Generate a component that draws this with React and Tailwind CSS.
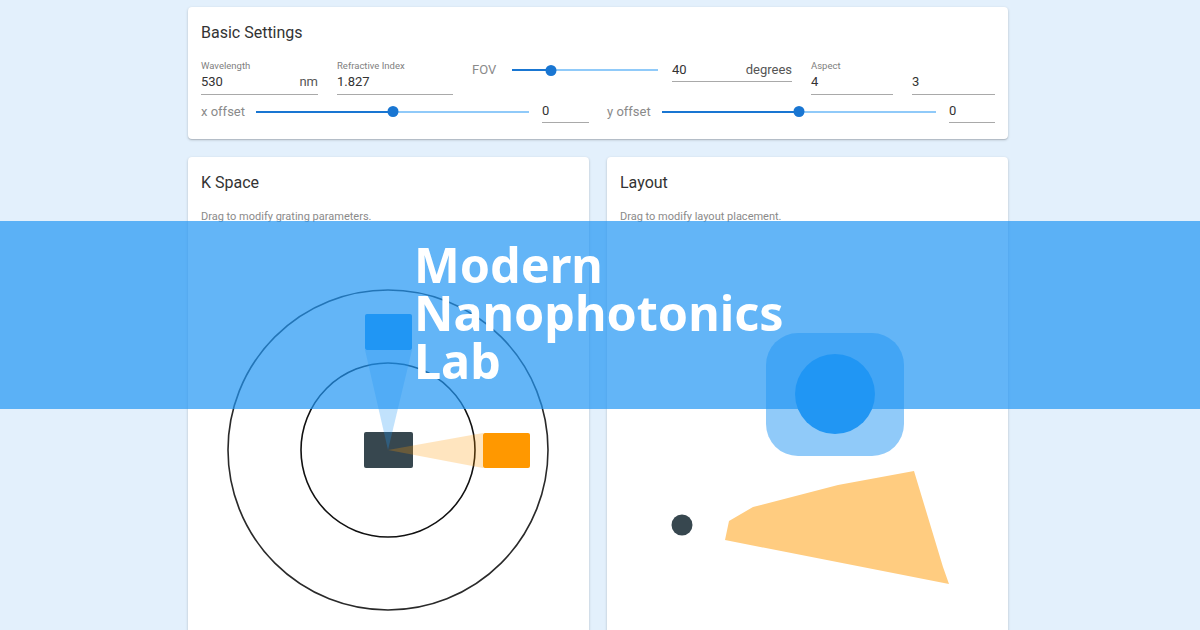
import React from "react";

function Field({ label, value, unit, className = "" }) {
  return (
    <div className={`flex flex-col border-b border-[#a9a9a9] ${className}`}>
      <span className="text-[9.5px] leading-[12px] text-[#808080]">{label || "\u00a0"}</span>
      <div className="flex justify-between pb-[3px] pt-[1px] text-[13px] leading-[18px] text-[#333]">
        <span>{value}</span>
        {unit && <span className="text-[#555]">{unit}</span>}
      </div>
    </div>
  );
}

function PlainInput({ value, unit, className = "" }) {
  return (
    <div className={`flex justify-between border-b border-[#a9a9a9] pb-[2px] text-[13px] leading-[18px] text-[#333] ${className}`}>
      <span>{value}</span>
      {unit && <span className="text-[#555]">{unit}</span>}
    </div>
  );
}

function Slider({ pct, className = "" }) {
  return (
    <div className={`relative flex h-[12px] items-center ${className}`}>
      <div className="h-[2px] w-full bg-[#90caf9]" />
      <div className="absolute left-0 h-[2px] bg-[#1976d2]" style={{ width: pct + "%" }} />
      <div
        className="absolute h-[11px] w-[11px] -translate-x-1/2 rounded-full bg-[#1976d2]"
        style={{ left: pct + "%" }}
      />
    </div>
  );
}

function Card({ title, subtitle, children, className = "" }) {
  return (
    <div className={`rounded-[4px] bg-white shadow-[0_1px_3px_rgba(0,0,0,0.18),0_1px_1px_rgba(0,0,0,0.12)] ${className}`}>
      <div className="px-[13px] pt-[14px]">
        <h2 className="text-[16px] leading-[24px] text-[#333]">{title}</h2>
        {subtitle && (
          <p className="mt-[14px] text-[11px] leading-[16px] text-[#8a8a8a]">{subtitle}</p>
        )}
      </div>
      {children}
    </div>
  );
}

function KSpace() {
  return (
    <svg width="401" height="420" viewBox="0 0 401 420" className="block">
      <circle cx="200" cy="225" r="160" fill="none" stroke="#2a2a2a" strokeWidth="1.6" />
      <circle cx="200" cy="225" r="87" fill="none" stroke="#111" strokeWidth="1.6" />
      <rect x="176" y="207" width="49" height="36" rx="2" fill="#37474f" />
      <polygon points="200,225 177,125 224,125" fill="rgba(33,150,243,0.28)" />
      <polygon points="200,225 295,208 295,243" fill="rgba(255,152,0,0.25)" />
      <rect x="177" y="89" width="47" height="36" rx="2" fill="#2196f3" />
      <rect x="295" y="208" width="47" height="35" rx="2" fill="#ff9800" />
    </svg>
  );
}

function LayoutView() {
  return (
    <svg width="401" height="420" viewBox="0 0 401 420" className="block">
      <rect x="159" y="108" width="138" height="123" rx="32" fill="#90caf9" />
      <circle cx="228" cy="169" r="40" fill="#2196f3" />
      <circle cx="75" cy="300" r="10.5" fill="#37474f" />
      <polygon
        points="118,315 122,296 146,282 231,260 307,246 336,342 342,359"
        fill="#ffcc80"
      />
    </svg>
  );
}

export default function App() {
  return (
    <div className="relative h-[630px] w-[1200px] overflow-hidden bg-[#e3f0fc] pt-[7px] font-['Roboto','Liberation_Sans',sans-serif]">
      <div className="ml-[188px] w-[820px]">
        <Card title="Basic Settings" className="h-[132px]">
          <div className="px-[13px] pt-[15px]">
            <div className="flex items-start">
              <Field label="Wavelength" value="530" unit="nm" className="w-[117px]" />
              <Field label="Refractive Index" value="1.827" className="ml-[19px] w-[116px]" />
              <div className="ml-[19px] mt-[1px] flex items-start">
                <span className="w-[40px] text-[13px] leading-[18px] text-[#8a8a8a]">FOV</span>
                <Slider pct={26.7} className="mt-[3px] w-[146px]" />
                <PlainInput value="40" unit="degrees" className="ml-[14px] w-[120px]" />
              </div>
              <Field label="Aspect" value="4" className="ml-[19px] w-[82px]" />
              <Field value="3" className="ml-[19px] w-[83px]" />
            </div>
            <div className="mt-[5px] flex items-center">
              <span className="w-[55px] text-[13px] leading-[18px] text-[#8a8a8a]">x offset</span>
              <Slider pct={50} className="w-[273px]" />
              <PlainInput value="0" className="ml-[13px] mt-[2px] w-[47px]" />
              <span className="ml-[18px] w-[55px] text-[13px] leading-[18px] text-[#8a8a8a]">y offset</span>
              <Slider pct={50} className="w-[274px]" />
              <PlainInput value="0" className="ml-[13px] mt-[2px] w-[46px]" />
            </div>
          </div>
        </Card>

        <div className="mt-[18px] grid grid-cols-2 gap-[18px]">
          <Card title="K Space" subtitle="Drag to modify grating parameters.">
            <KSpace />
          </Card>
          <Card title="Layout" subtitle="Drag to modify layout placement.">
            <LayoutView />
          </Card>
        </div>
      </div>

      <div className="absolute left-0 top-[221px] h-[188px] w-full bg-[rgba(33,150,243,0.7)] pl-[414px] pt-[19px]">
        <h1 className="font-['Noto_Sans','Open_Sans',sans-serif] text-[48.5px] font-bold leading-[48px] text-white">
          Modern
          <br />
          Nanophotonics
          <br />
          Lab
        </h1>
      </div>
    </div>
  );
}
